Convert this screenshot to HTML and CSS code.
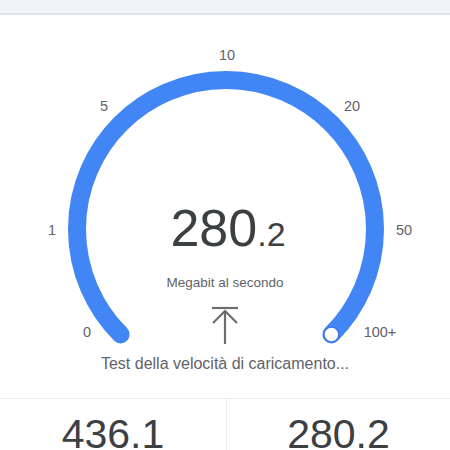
FILE: index.html
```html
<!DOCTYPE html>
<html lang="it">
<head>
    <meta charset="UTF-8">
    <meta name="viewport" content="width=device-width, initial-scale=1.0">
    <title>Test velocità</title>
    <link rel="stylesheet" href="styles.css">
</head>
<body>

<div class="topbar"></div>

<div class="gauge">
    <svg class="dial" viewBox="0 15 450 384" width="450" height="384">
        <path class="track" d="M 120.6 334.4 A 149 149 0 1 1 331.4 334.4" />
        <circle class="needle" cx="331.4" cy="334.4" r="7.5" />
        <text x="87" y="337">0</text>
        <text x="52" y="235">1</text>
        <text x="104" y="111">5</text>
        <text x="227" y="60">10</text>
        <text x="352" y="111">20</text>
        <text x="404" y="235">50</text>
        <text x="380" y="337">100+</text>
    </svg>

    <div class="readout">
        <div class="speed">280<span class="decimal">.2</span></div>
        <div class="unit">Megabit al secondo</div>
        <svg class="upload-icon" width="30" height="40" viewBox="0 0 30 40">
            <line x1="2" y1="2" x2="28" y2="2" />
            <polyline points="3,17 15,5 27,17" />
            <line x1="15" y1="5" x2="15" y2="38" />
        </svg>
        <div class="status">Test della velocità di caricamento...</div>
    </div>
</div>

<div class="results">
    <div class="result">436.1</div>
    <div class="result">280.2</div>
</div>

</body>
</html>
```

FILE: styles.css
```css
/* Speed test gauge */
body {
    margin: 0;
    font-family: "Liberation Sans", Arial, sans-serif;
    background: #ffffff;
    height: 450px;
    overflow: hidden;
}
.topbar {
    height: 13px;
    background: #f1f3f4;
    border-bottom: 2px solid #e2e4e6;
}
.gauge {
    position: relative;
    height: 383px;
    border-bottom: 1px solid #ebebeb;
}
.dial {
    position: absolute;
    top: 0;
    left: 0;
}
.dial .track {
    fill: none;
    stroke: #4285f4;
    stroke-width: 18;
    stroke-linecap: round;
}
.dial .needle {
    fill: #ffffff;
    stroke: #3b78e7;
    stroke-width: 1.5;
}
.dial text {
    font-family: "Liberation Sans", Arial, sans-serif;
    font-size: 14.5px;
    fill: #5f6368;
    text-anchor: middle;
}
.readout {
    position: relative;
    display: flex;
    flex-direction: column;
    align-items: center;
    padding-top: 187px;
}
.speed {
    font-size: 52px;
    line-height: 52px;
    color: #3c4043;
    padding-left: 6px;
}
.decimal {
    font-size: 34px;
}
.unit {
    margin-top: 15px;
    font-size: 13.5px;
    line-height: 16px;
    color: #5f6368;
}
.upload-icon {
    margin-top: 15px;
    fill: none;
    stroke: #6b6e72;
    stroke-width: 2.2;
}
.status {
    margin-top: 8px;
    font-size: 16px;
    line-height: 20px;
    color: #5f6368;
}
.results {
    display: grid;
    grid-template-columns: 227px 1fr;
}
.result {
    padding-top: 15px;
    height: 36px;
    font-size: 41px;
    line-height: 41px;
    color: #3c4043;
    text-align: center;
}
.result:first-child {
    border-right: 1px solid #ebebeb;
}
```
